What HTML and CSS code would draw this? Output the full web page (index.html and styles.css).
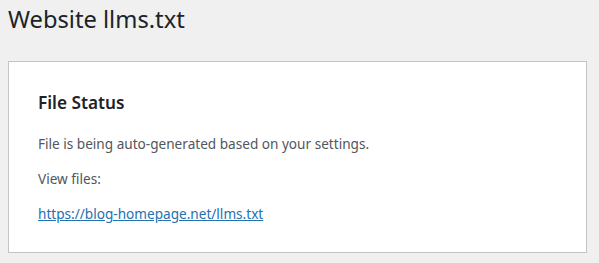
FILE: index.html
```html
<!DOCTYPE html>
<html>
<head>
<meta charset="utf-8">
<link rel="stylesheet" href="styles.css">
</head>
<body>
<div class="wrap">
  <h1 class="page-title">Website llms.txt</h1>
  <div class="card">
    <h2 class="card-title">File Status</h2>
    <p class="card-text">File is being auto-generated based on your settings.</p>
    <p class="card-text">View files:</p>
    <p class="card-text"><a class="file-link" href="#">https://blog-homepage.net/llms.txt</a></p>
  </div>
</div>
</body>
</html>
```
FILE: styles.css
```css
html, body {
  margin: 0;
  padding: 0;
  background: #f0f0f1;
  font-family: "Noto Sans", "Open Sans", sans-serif;
  color: #1d2327;
}
.wrap {
  padding: 0 12px 0 8px;
}
.page-title {
  margin: 0;
  padding-top: 4px;
  font-size: 23.7px;
  font-weight: 400;
  line-height: 30px;
  color: #1d2327;
}
.card {
  margin-top: 27px;
  background: #fff;
  border: 1px solid #c3c4c7;
  box-shadow: 0 1px 1px rgba(0,0,0,0.04);
  padding: 28px 29px 20px;
  height: 142px;
}
.card-title {
  margin: 0 0 17px;
  font-size: 17.2px;
  font-weight: 600;
  line-height: 26px;
  color: #1d2327;
}
.card-text {
  margin: 0 0 14px;
  font-size: 13.6px;
  line-height: 21px;
  color: #50575e;
}
.file-link {
  color: #2271b1;
  text-decoration: underline;
}
```
